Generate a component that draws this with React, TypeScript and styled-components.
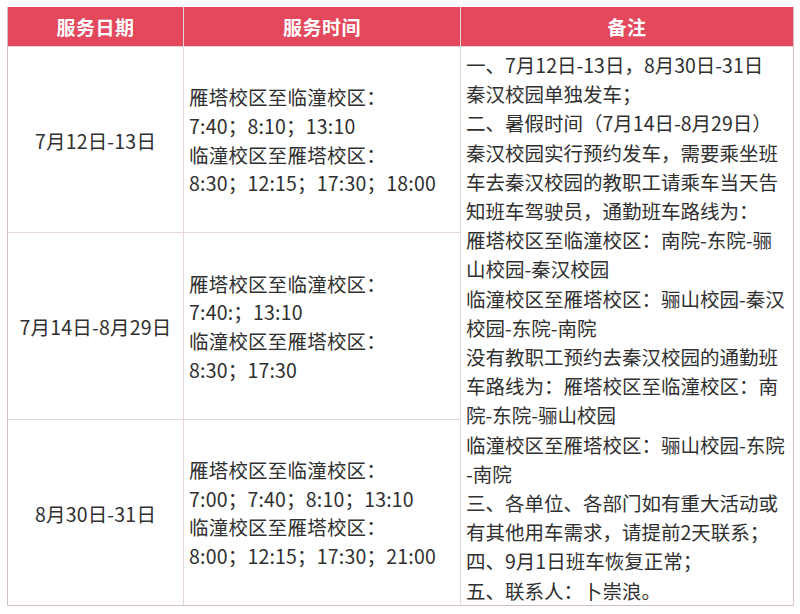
import { Fragment } from 'react';
import styled, { createGlobalStyle } from 'styled-components';

const GlobalStyle = createGlobalStyle`
  html, body {
    margin: 0;
    padding: 0;
    background: #fff;
  }
  body {
    font-family: "Noto Sans CJK SC", "Noto Sans", sans-serif;
    color: #303030;
  }
`;

const schedule = [
  {
    date: '7月12日-13日',
    times: ['雁塔校区至临潼校区：', '7:40；8:10；13:10', '临潼校区至雁塔校区：', '8:30；12:15；17:30；18:00'],
  },
  {
    date: '7月14日-8月29日',
    times: ['雁塔校区至临潼校区：', '7:40:；13:10', '临潼校区至雁塔校区：', '8:30；17:30'],
  },
  {
    date: '8月30日-31日',
    times: ['雁塔校区至临潼校区：', '7:00；7:40；8:10；13:10', '临潼校区至雁塔校区：', '8:00；12:15；17:30；21:00'],
  },
];

const notes = [
  '一、7月12日-13日，8月30日-31日',
  '秦汉校园单独发车；',
  '二、暑假时间（7月14日-8月29日）',
  '秦汉校园实行预约发车，需要乘坐班',
  '车去秦汉校园的教职工请乘车当天告',
  '知班车驾驶员，通勤班车路线为：',
  '雁塔校区至临潼校区：南院-东院-骊',
  '山校园-秦汉校园',
  '临潼校区至雁塔校区：骊山校园-秦汉',
  '校园-东院-南院',
  '没有教职工预约去秦汉校园的通勤班',
  '车路线为：雁塔校区至临潼校区：南',
  '院-东院-骊山校园',
  '临潼校区至雁塔校区：骊山校园-东院',
  '-南院',
  '三、各单位、各部门如有重大活动或',
  '有其他用车需求，请提前2天联系；',
  '四、9月1日班车恢复正常；',
  '五、联系人：卜崇浪。',
];

const App = () => {
  return (
    <>
      <GlobalStyle />
      <Page>
        <Table>
          <HeadCell>服务日期</HeadCell>
          <HeadCell>服务时间</HeadCell>
          <HeadCell>备注</HeadCell>
          {schedule.map((row, i) => (
            <Fragment key={i}>
              <DateCell row={i + 2}>{row.date}</DateCell>
              <TimeCell row={i + 2}>
                {row.times.map((t, j) => <Line key={j}>{t}</Line>)}
              </TimeCell>
            </Fragment>
          ))}
          <NoteCell>
            {notes.map((n, i) => <NoteLine key={i}>{n}</NoteLine>)}
          </NoteCell>
        </Table>
      </Page>
    </>
  );
};

const Page = styled.div`
  padding: 7px 0 0 7px;
`;

const Table = styled.div`
  width: 787px;
  box-sizing: border-box;
  display: grid;
  grid-template-columns: 175px 276px 1fr;
  grid-template-rows: 39px repeat(3, 1fr);
  gap: 1px;
  background: #e6d6da;
  border: 1px solid #d3c1c6;
  border-top: none;
`;

const HeadCell = styled.div`
  background: #e4485d;
  color: #fff;
  font-size: 19px;
  font-weight: 700;
  display: flex;
  align-items: center;
  justify-content: center;
  letter-spacing: 0.5px;
`;

const DateCell = styled.div<{ row: number }>`
  grid-column: 1;
  grid-row: ${props => props.row};
  background: #fff;
  display: flex;
  align-items: center;
  justify-content: center;
  font-size: 19.5px;
  letter-spacing: 0.2px;
  padding-top: 2px;
`;

const TimeCell = styled.div<{ row: number }>`
  grid-column: 2;
  grid-row: ${props => props.row};
  background: #fff;
  display: flex;
  flex-direction: column;
  justify-content: center;
  padding: 2px 0 0 5px;
  font-size: 19.5px;
  letter-spacing: 0.2px;
`;

const Line = styled.div`
  line-height: 28.7px;
  white-space: nowrap;
`;

const NoteCell = styled.div`
  grid-column: 3;
  grid-row: 2 / span 3;
  background: #fff;
  padding: 3px 0 0 5px;
  font-size: 19.5px;
`;

const NoteLine = styled.div`
  line-height: 29.2px;
  white-space: nowrap;
`;

export default App;
